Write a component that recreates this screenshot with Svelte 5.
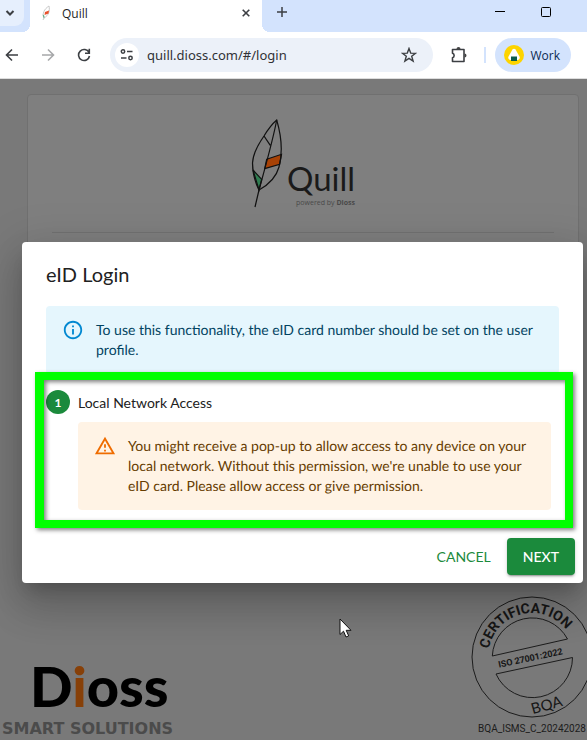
<script>
	let tabTitle = "Quill";
	let address = "quill.dioss.com/#/login";
	let dialogOpen = true;
	let steps = [
		{
			label: "Local Network Access",
			text: "You might receive a pop-up to allow access to any device on your local network. Without this permission, we're unable to use your eID card. Please allow access or give permission."
		}
	];
	function fnClose(){
		dialogOpen = false;
	}
</script>

<div class="browser">
	<header>
		<div class="tabstrip">
			<button class="tab-search" aria-label="Search tabs">
				<svg width="10" height="8" viewBox="0 0 10 8"><path d="M1.5 2 5 5.5 8.5 2" stroke-width="2"/></svg>
			</button>
			<div class="tab">
				<svg class="favicon" width="12" height="16" viewBox="0 0 12 16">
					<path d="M9 1C4 4 2 9 4 13L3 15M9 1C10 6 9 10 4 13" style:stroke="#c9c9c9"/>
					<path d="M5 7 9 5.500 8.500 8.500 4.500 10z" fill="#e8502a" stroke="none"/>
					<path d="M2.500 9.500 4.500 11 4 13.500z" fill="#4aa574" stroke="none"/>
				</svg>
				<span>{tabTitle}</span>
				<button class="tab-close" aria-label="Close tab">
					<svg width="8" height="8" viewBox="0 0 8 8"><path d="M.7.7 7.300 7.300M7.300.7.7 7.300" stroke-width="1.600"/></svg>
				</button>
			</div>
			<button class="tool new-tab" aria-label="New tab">
				<svg width="12" height="12" viewBox="0 0 12 12"><path d="M6 1v10M1 6h10" stroke-width="1.500"/></svg>
			</button>
			<div class="window-controls">
				<button aria-label="Minimize"><svg width="10" height="10" viewBox="0 0 10 10"><path d="M0 4.500h10" stroke="#000"/></svg></button>
				<button aria-label="Maximize"><svg width="10" height="10" viewBox="0 0 10 10"><rect x=".5" y=".5" width="9" height="9" rx="1" stroke="#000"/></svg></button>
			</div>
		</div>
		<div class="toolbar">
			<button class="tool" aria-label="Back">
				<svg width="14" height="14" viewBox="0 0 14 14"><path d="M13 7H2M7 1.500 1.500 7 7 12.500" stroke-width="1.600"/></svg>
			</button>
			<button class="tool dim" aria-label="Forward">
				<svg width="14" height="14" viewBox="0 0 14 14"><path d="M1 7h11M7 1.500 12.500 7 7 12.500" stroke-width="1.600"/></svg>
			</button>
			<button class="tool" aria-label="Reload">
				<svg width="14" height="14" viewBox="0 0 14 14"><path d="M12 4.500A5.500 5.500 0 1 0 12.500 8M12.300.8v4.400H8" stroke-width="1.600"/></svg>
			</button>
			<div class="omnibox">
				<button class="site-info" aria-label="Site information">
					<svg width="14" height="12" viewBox="0 0 14 12" stroke-width="1.500"><circle cx="3" cy="2.500" r="1.700"/><path d="M7 2.500h5.500M1 9h5.500"/><circle cx="10.500" cy="9" r="1.700"/></svg>
				</button>
				<input type="text" aria-label="Address" bind:value={address} spellcheck="false">
				<button class="tool" aria-label="Bookmark this tab">
					<svg width="16" height="16" viewBox="0 0 16 16"><path d="m8 1.500 1.700 4.600 4.900.2-3.900 3 1.400 4.700L8 11.300 3.900 14l1.400-4.700-3.900-3 4.900-.2z" stroke-width="1.400"/></svg>
				</button>
			</div>
			<button class="tool" aria-label="Extensions">
				<svg width="18" height="18" viewBox="0 0 18 18">
					<path d="M2.500 3.500h11.500v12H2.500v-3.800a2.300 2.300 0 0 0 0-4.400z" stroke-width="1.600" stroke-linejoin="round"/>
					<path d="M6.500 3a2 2 0 0 1 4 0zM14.500 7.500a2 2 0 0 1 0 4z" fill="#444" stroke="none"/>
				</svg>
			</button>
			<i class="divider"></i>
			<button class="profile">
				<svg width="20" height="20" viewBox="0 0 20 20" stroke="none">
					<circle cx="10" cy="10" r="10" fill="#fdd400"/>
					<path d="M8.500 4.500Q10 3 11.500 4.500L15.500 11.500Q16.500 14 14 15H6Q3.500 14 4.500 11.500z" fill="#fff"/>
					<path d="M7 11.500h6V16H7z" fill="#0b5c4b"/>
				</svg>
				Work
			</button>
		</div>
	</header>

	<div class="viewport">
		<main class="page">
			<div class="card">
				<div class="quill-logo">
					<svg width="34" height="90" viewBox="0 0 34 90" stroke="#111" stroke-width="1.200">
						<path d="M2 52 10.700 61.300 8 72z" fill="#2f7d51"/>
						<path d="M15.700 41.300 30.500 36.300 28.700 46.300 13.700 50.700z" fill="#a84206"/>
						<path d="M25.700 2C20 7 16 13 13 18 6 28 2 36 1.500 45 1.500 56 5 66 8 72 17 67 25 60 28 49 32 34 31 20 25.700 2z"/>
						<path d="M25.700 2C22 22 14 50 8 72L4 89M13 18 19.300 27.300"/>
					</svg>
					<div class="wordmark">
						<span class="name">Quill</span>
						<span class="powered">powered by <b>Dioss</b></span>
					</div>
				</div>
				<hr>
			</div>
			<footer>
				<div class="dioss-logo">
					<strong>D<em>i</em>oss</strong>
					<span>SMART SOLUTIONS</span>
				</div>
				<figure>
					<svg width="122" height="122" viewBox="0 0 122 122" stroke="#1c1c1c">
						<defs><path id="seal-arc" d="M17 61A44 44 0 0 1 105 61"/></defs>
						<circle cx="61" cy="61" r="60"/>
						<path d="M21.300 60A40 40 0 0 1 96.500 43z"/>
						<path d="M25 78 101.500 61.500A40 40 0 0 1 25 78z"/>
						<g fill="#161616" stroke="none" text-anchor="middle">
							<text class="seal-top" transform="rotate(-14 61 61)"><textPath href="#seal-arc" startOffset="50%">CERTIFICATION</textPath></text>
							<text class="seal-iso" transform="translate(60 65) rotate(-12)">ISO 27001:2022</text>
							<text class="seal-bqa" transform="translate(77 114) rotate(-16)">BQA</text>
						</g>
					</svg>
					<figcaption>BQA_ISMS_C_20242028</figcaption>
				</figure>
			</footer>
		</main>

		{#if dialogOpen}
		<div class="backdrop">
			<div class="dialog" role="dialog" aria-labelledby="dialog-title">
				<h2 id="dialog-title">eID Login</h2>
				<div class="content">
					<div class="alert info">
						<svg width="22" height="22" viewBox="0 0 24 24" stroke="none">
							<path fill="#0288d1" d="M11 7h2v2h-2zm0 4h2v6h-2zm1-9C6.480 2 2 6.480 2 12s4.480 10 10 10 10-4.480 10-10S17.520 2 12 2zm0 18c-4.410 0-8-3.590-8-8s3.590-8 8-8 8 3.590 8 8-3.590 8-8 8z"/>
						</svg>
						<p>To use this functionality, the eID card number should be set on the user profile.</p>
					</div>
					<div class="stepper">
						{#each steps as step, i}
						<div class="step-label"><span class="step-icon">{i + 1}</span>{step.label}</div>
						<div class="alert warning">
							<svg width="22" height="22" viewBox="0 0 24 24" stroke="none">
								<path fill="#ef6c00" d="M12 5.990 19.530 19H4.470L12 5.990M12 2 1 21h22L12 2zm1 14h-2v2h2v-2zm0-6h-2v4h2v-4z"/>
							</svg>
							<p>{step.text}</p>
						</div>
						{/each}
						<div class="highlight"></div>
					</div>
				</div>
				<div class="actions">
					<button class="btn" on:click={fnClose}>CANCEL</button>
					<button class="btn contained">NEXT</button>
				</div>
			</div>
		</div>
		{/if}

		<svg class="cursor" width="13" height="20" viewBox="0 0 13 20">
			<path d="M1 1v15.500l3.500-3.300L7 19l2.700-1.100-2.500-5.600H12z" fill="#fff" stroke="#111"/>
		</svg>
	</div>
</div>

<style>
:global(body){
	margin:0;
	background:#797979;
}
.browser{
	display:flex;
	flex-direction:column;
	height:100vh;
	overflow:hidden;
	font-family:"Lato","Liberation Sans",sans-serif;
}
button{
	display:flex;
	align-items:center;
	justify-content:center;
	padding:0;
	border:0;
	background:none;
	font-family:inherit;
	cursor:pointer;
}
svg{
	flex:none;
	fill:none;
}
header{
	font-family:"Open Sans","Noto Sans",sans-serif;
	background:#fff;
	border-bottom:1px solid #ddd;
}
header svg{
	stroke:#3c3f43;
}
header svg[stroke="none"]{
	stroke:none;
}
.tabstrip{
	display:flex;
	height:32px;
	background:#d3e3fd;
}
.tab-search{
	width:24px;
	height:26px;
	padding-right:4px;
	border-radius:0 0 9px 0;
	background:#e6effd;
}
.tab{
	position:relative;
	display:flex;
	align-items:center;
	gap:10px;
	width:232px;
	height:32px;
	margin-left:6px;
	padding:0 12px 6px 10px;
	box-sizing:border-box;
	background:#fff;
	font-size:12px;
	color:#1f1f1f;
}
.tab::before,
.tab::after{
	content:"";
	position:absolute;
	bottom:0;
	width:8px;
	height:8px;
}
.tab::before{
	right:100%;
	background:radial-gradient(circle at 0 0,transparent 8px,#fff 8px);
}
.tab::after{
	left:100%;
	background:radial-gradient(circle at 100% 0,transparent 8px,#fff 8px);
}
.tab-close{
	width:8px;
	margin-left:auto;
}
.tool{
	flex:none;
	width:24px;
	height:24px;
}
.dim{
	opacity:.45;
}
.new-tab{
	margin-left:8px;
}
.window-controls{
	display:flex;
	margin:0 18px 0 auto;
}
.window-controls button{
	width:46px;
	height:24px;
}
.toolbar{
	display:flex;
	align-items:center;
	gap:12px;
	height:46px;
	padding-right:16px;
}
.omnibox{
	display:flex;
	flex:1;
	align-items:center;
	gap:8px;
	min-width:0;
	height:34px;
	margin:0 2px;
	padding:0 12px 0 5px;
	box-sizing:border-box;
	border-radius:17px;
	background:#ecf1f9;
}
.site-info{
	flex:none;
	width:24px;
	height:24px;
	border-radius:50%;
	background:#fff;
}
.omnibox input{
	flex:1;
	min-width:0;
	padding:0;
	border:0;
	outline:0;
	background:none;
	font:13px "Noto Sans","Open Sans",sans-serif;
	color:#303236;
}
.divider{
	width:2px;
	height:16px;
	margin-left:1px;
	background:#d3e3fd;
}
.profile{
	gap:6px;
	height:34px;
	margin-left:-3px;
	padding:0 11px 0 9px;
	border-radius:17px;
	background:#d3e3fd;
	font-size:12px;
	color:#0b2a52;
}
.viewport{
	position:relative;
	display:grid;
	flex:1;
	min-height:0;
}
.page,
.backdrop{
	grid-area:1 / 1;
}
.page{
	display:flex;
	flex-direction:column;
	justify-content:space-between;
	padding:15px 8px 0 27px;
	background:#797979;
}
.card{
	height:420px;
	border:1px solid #707070;
	border-radius:4px;
	background:#7f7f7f;
}
.quill-logo{
	display:flex;
	justify-content:center;
	gap:2px;
	padding-top:23px;
}
.wordmark{
	display:flex;
	flex-direction:column;
	justify-content:flex-end;
	align-items:flex-end;
}
.name{
	font:33px/40px "Lato",sans-serif;
	color:#1a1a1a;
}
.powered{
	font:7px/10px "Open Sans",sans-serif;
	color:#4a4a4a;
}
.card hr{
	margin:24px;
	border:0;
	border-top:1px solid #727272;
}
footer{
	display:flex;
	justify-content:space-between;
	align-items:flex-end;
	margin:-200px -14px 0 -25px;
}
.dioss-logo{
	display:flex;
	flex-direction:column;
	padding-bottom:2px;
	font-size:16px;
	line-height:18px;
	color:#4b4b4b;
}
.dioss-logo strong{
	margin-left:28px;
	font-size:56px;
	line-height:68px;
	font-weight:900;
	color:#000;
}
.dioss-logo em{
	font-style:normal;
	color:#874008;
}
.dioss-logo span{
	font-family:"DejaVu Sans",sans-serif;
	font-weight:700;
}
figure{
	display:flex;
	flex-direction:column;
	align-items:center;
	margin:0;
}
figcaption{
	padding:2px 0;
	font:10px/18px Roboto,sans-serif;
	color:#1c1c1c;
}
.seal-top{
	font:700 14px Roboto,sans-serif;
}
.seal-iso{
	font:700 9px Roboto,sans-serif;
}
.seal-bqa{
	font:15px Lato,sans-serif;
}
.backdrop{
	padding:163px 4px 0 22px;
}
.dialog{
	position:relative;
	border-radius:4px;
	background:#fff;
	box-shadow:0 11px 15px -7px rgba(0,0,0,.2),0 24px 38px 3px rgba(0,0,0,.14),0 9px 46px 8px rgba(0,0,0,.12);
}
h2{
	margin:0;
	padding:16px 24px;
	font-size:20px;
	line-height:32px;
	font-weight:400;
	color:#212121;
}
.content{
	padding:0 24px;
}
.alert{
	display:flex;
	gap:12px;
	padding:6px 16px;
	border-radius:4px;
	font-size:14px;
	line-height:20px;
	text-rendering:geometricPrecision;
}
.alert svg{
	padding:7px 0;
}
.alert p{
	margin:0;
	padding:8px 0;
}
.info{
	background:#e5f6fd;
	color:#014361;
}
.warning{
	margin:8px 8px 0 32px;
	background:#fff3e5;
	color:#663c00;
}
.stepper{
	position:relative;
	padding:16px 0 20px;
}
.step-label{
	display:flex;
	align-items:center;
	gap:8px;
	font-size:14px;
	color:#212121;
}
.step-icon{
	display:grid;
	place-items:center;
	width:24px;
	height:24px;
	border-radius:50%;
	background:#1b8a3c;
	font-size:12px;
	font-weight:700;
	color:#fff;
}
.highlight{
	position:absolute;
	inset:-2px -14px 2px -11px;
	border:solid #0f0;
	border-width:8px 8px 8px 9px;
	filter:drop-shadow(2px 2px 2px rgba(0,0,0,.5));
	pointer-events:none;
}
.actions{
	display:flex;
	justify-content:flex-end;
	gap:8px;
	padding:8px;
}
.btn{
	padding:6px 8px;
	border-radius:4px;
	font-size:14px;
	line-height:25px;
	color:#1b8a3c;
}
.contained{
	padding:6px 16px;
	background:#1b8a3c;
	font-weight:500;
	color:#fff;
	box-shadow:0 3px 1px -2px rgba(0,0,0,.2),0 2px 2px rgba(0,0,0,.14),0 1px 5px rgba(0,0,0,.12);
}
.cursor{
	position:absolute;
	left:339px;
	top:539px;
}
</style>
